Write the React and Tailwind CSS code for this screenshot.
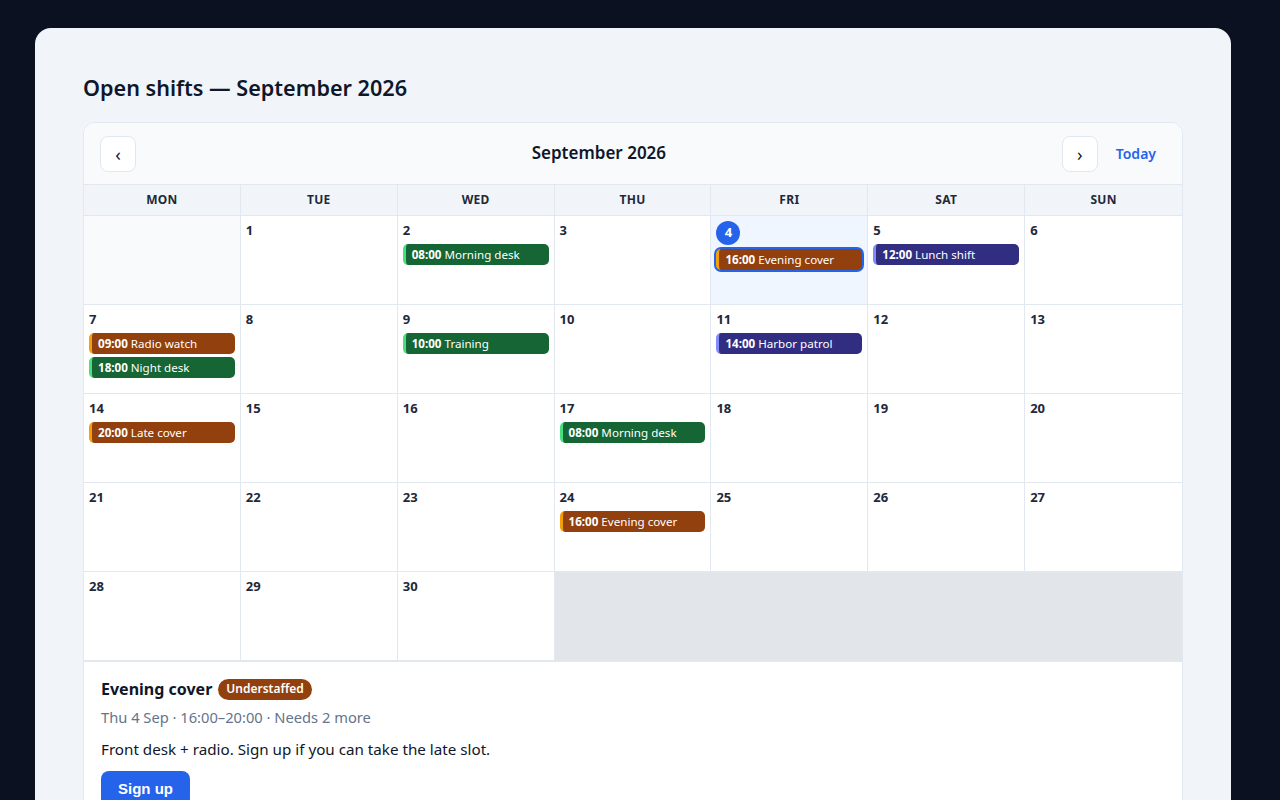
import React from 'react';

const tones = {
  amber: 'bg-[#92400e] border-[#f59e0b]',
  green: 'bg-[#166534] border-[#4ade80]',
  indigo: 'bg-[#312e81] border-[#818cf8]',
};

const shifts = {
  2: [{ time: '08:00', name: 'Morning desk', tone: 'green' }],
  4: [{ time: '16:00', name: 'Evening cover', tone: 'amber', selected: true }],
  5: [{ time: '12:00', name: 'Lunch shift', tone: 'indigo' }],
  7: [
    { time: '09:00', name: 'Radio watch', tone: 'amber' },
    { time: '18:00', name: 'Night desk', tone: 'green' },
  ],
  9: [{ time: '10:00', name: 'Training', tone: 'green' }],
  11: [{ time: '14:00', name: 'Harbor patrol', tone: 'indigo' }],
  14: [{ time: '20:00', name: 'Late cover', tone: 'amber' }],
  17: [{ time: '08:00', name: 'Morning desk', tone: 'green' }],
  24: [{ time: '16:00', name: 'Evening cover', tone: 'amber' }],
};

const weekdays = ['MON', 'TUE', 'WED', 'THU', 'FRI', 'SAT', 'SUN'];

const Chip = ({ shift }) => (
  <div
    className={`flex items-center h-[21px] rounded-[5px] border-l-[3px] pl-[6px] text-[11.6px] leading-none text-white whitespace-pre overflow-hidden ${tones[shift.tone]} ${
      shift.selected ? 'ring-2 ring-[#2563eb]' : ''
    }`}
  >
    <span className="font-bold">{shift.time}</span>
    <span>{' ' + shift.name}</span>
  </div>
);

const DayCell = ({ day, col }) => {
  const isToday = day === 4;
  const list = shifts[day] || [];
  return (
    <div
      className={`h-[89px] border-b border-[#e2e8f0] px-[5px] pt-1 ${col < 6 ? 'border-r' : ''} ${
        isToday ? 'bg-[#eff6ff]' : 'bg-white'
      }`}
    >
      {isToday ? (
        <div className="mt-px w-6 h-6 rounded-full bg-[#2563eb] text-white text-[13px] font-bold flex items-center justify-center">
          {day}
        </div>
      ) : (
        <div className="text-[13px] leading-5 font-bold text-[#1e293b]">{day}</div>
      )}
      <div className="mt-1 flex flex-col gap-[3px]">
        {list.map((s, i) => (
          <Chip key={i} shift={s} />
        ))}
      </div>
    </div>
  );
};

export default function App() {
  const cells = [];
  for (let d = 1; d <= 30; d++) cells.push(d);

  return (
    <div className="min-h-screen bg-[#0b1120] py-7 pl-[35px] font-['Noto_Sans',sans-serif]">
      <div className="w-[1196px] bg-[#f1f5f9] rounded-2xl px-12 pt-[46px] pb-12">
        <h1 className="text-[21.6px] leading-7 font-semibold text-[#0f172a] mb-5">Open shifts — September 2026</h1>

        <div className="border border-[#e2e8f0] rounded-xl overflow-hidden bg-white">
          <div className="h-[62px] bg-[#f8fafc] border-b border-[#e2e8f0] flex items-center pl-4 pr-[14px]">
            <button className="w-9 h-9 rounded-lg border border-[#e2e8f0] bg-white text-[#0f172a] text-[18px] leading-none flex items-center justify-center">
              ‹
            </button>
            <div className="flex-1 text-center text-[17px] leading-6 font-semibold text-[#0f172a] -mt-0.5">September 2026</div>
            <div className="flex items-center gap-1.5">
              <button className="w-9 h-9 rounded-lg border border-[#e2e8f0] bg-white text-[#0f172a] text-[18px] leading-none flex items-center justify-center">
                ›
              </button>
              <button className="px-3 h-9 text-[14px] font-semibold text-[#2563eb]">Today</button>
            </div>
          </div>

          <div className="grid grid-cols-7">
            {weekdays.map((w, i) => (
              <div
                key={w}
                className={`h-[31px] bg-[#f1f5f9] border-b border-[#e2e8f0] flex items-center justify-center text-[12px] font-bold tracking-wide text-[#1e293b] ${
                  i < 6 ? 'border-r' : ''
                }`}
              >
                {w}
              </div>
            ))}
            <div className="h-[89px] bg-[#f8fafc] border-r border-b border-[#e2e8f0]" />
            {cells.map((d) => (
              <DayCell key={d} day={d} col={d % 7} />
            ))}
            <div className="col-span-4 h-[89px] bg-[#e2e5e9]" />
          </div>

          <div className="bg-white border-t border-[#e2e8f0] pl-[17px] pr-4 pt-[15px] pb-4">
            <div className="flex items-center gap-1.5">
              <span className="text-[16px] leading-6 font-bold text-[#0f172a]">Evening cover</span>
              <span className="rounded-full bg-[#92400e] text-white text-[12px] font-semibold px-2 h-[21px] flex items-center">
                Understaffed
              </span>
            </div>
            <p className="mt-1.5 text-[14.7px] leading-5 text-[#64748b]">Thu 4 Sep · 16:00–20:00 · Needs 2 more</p>
            <p className="mt-3 text-[15.2px] leading-5 text-[#0f172a]">
              Front desk + radio. Sign up if you can take the late slot.
            </p>
            <button className="mt-3 h-9 px-[17px] rounded-lg bg-[#2563eb] text-white text-[15px] font-bold font-['Liberation_Sans',sans-serif]">
              Sign up
            </button>
          </div>
        </div>
      </div>
    </div>
  );
}
